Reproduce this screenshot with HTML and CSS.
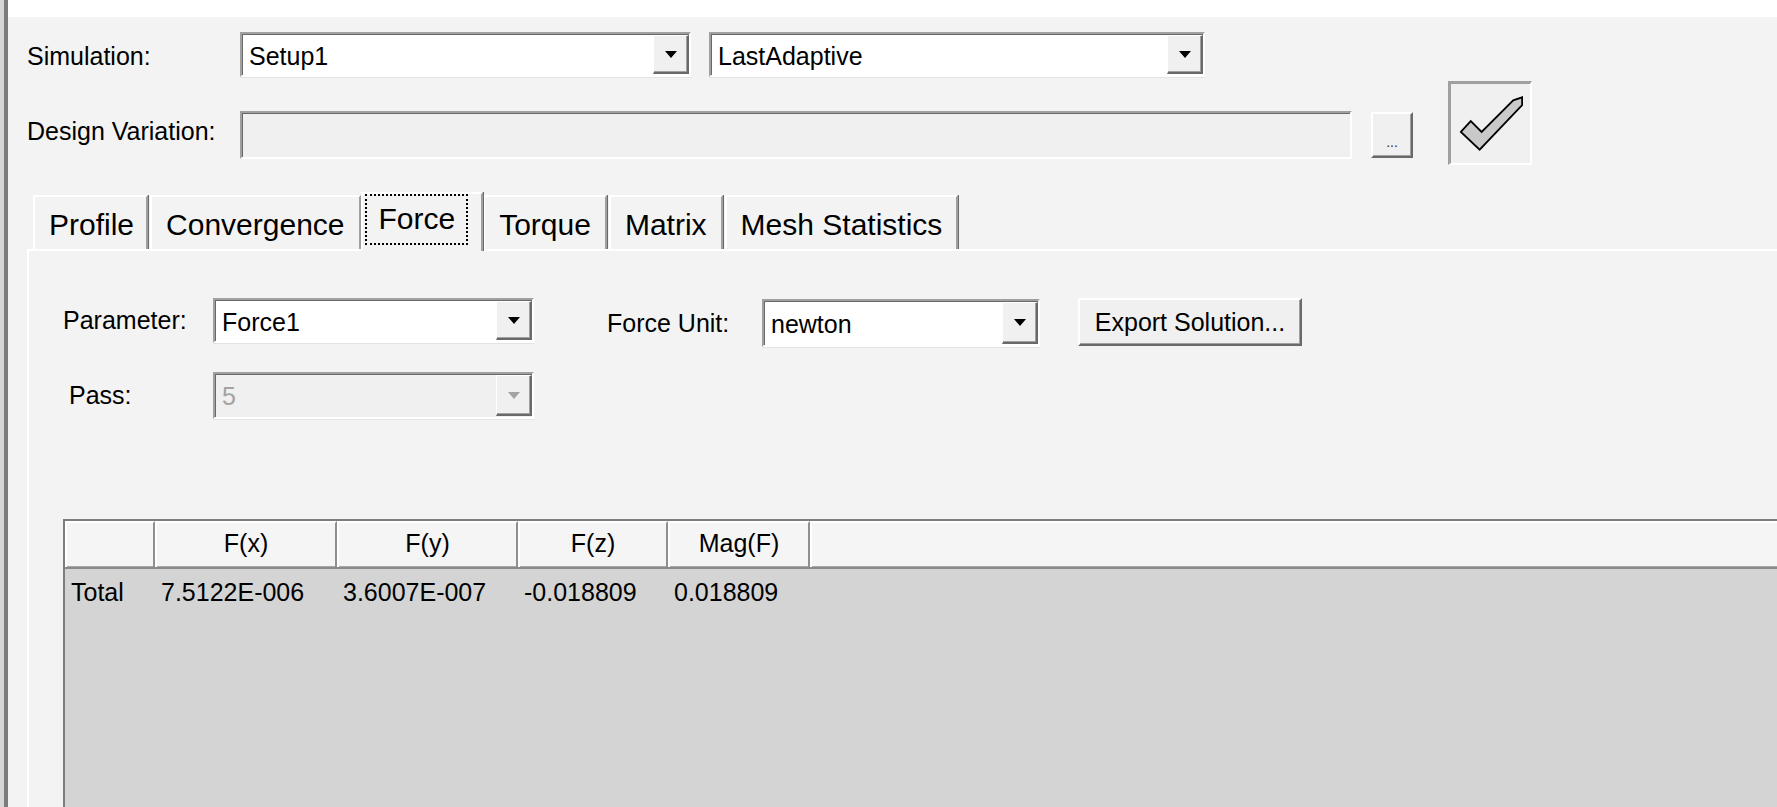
FILE: index.html
```html
<!DOCTYPE html>
<html lang="en">
<head>
    <meta charset="UTF-8">
    <meta name="viewport" content="width=device-width, initial-scale=1.0">
    <title>Solutions</title>
    <link rel="stylesheet" href="styles.css">
</head>
<body>
    <div class="window">
        <div class="frame-edge"></div>
        <div class="main">
            <div class="topbar"></div>

            <div class="content">
                <div class="sim-row">
                    <label class="label top-label">Simulation:</label>
                    <div class="combo setup-combo">
                        <span class="combo-text">Setup1</span>
                        <span class="combo-btn"><span class="arrow"></span></span>
                    </div>
                    <div class="combo solution-combo">
                        <span class="combo-text">LastAdaptive</span>
                        <span class="combo-btn"><span class="arrow"></span></span>
                    </div>
                </div>

                <div class="variation-row">
                    <label class="label top-label variation-label">Design Variation:</label>
                    <div class="textbox variation-box"></div>
                    <button class="btn dots-btn">...</button>
                    <button class="check-btn">
                        <svg width="80" height="80" viewBox="0 0 80 80">
                            <polygon points="10,48 20,37 31,48 63,16 72,13 72,21 29,66" fill="#c9c9c9" stroke="#000" stroke-width="1.8" stroke-linejoin="miter"/>
                        </svg>
                    </button>
                </div>

                <div class="tabs">
                    <div class="tab">Profile</div>
                    <div class="tab">Convergence</div>
                    <div class="tab active"><span class="focus">Force</span></div>
                    <div class="tab">Torque</div>
                    <div class="tab">Matrix</div>
                    <div class="tab">Mesh Statistics</div>
                </div>

                <div class="tab-panel">
                    <div class="param-row">
                        <label class="label param-label">Parameter:</label>
                        <div class="combo param-combo">
                            <span class="combo-text">Force1</span>
                            <span class="combo-btn"><span class="arrow"></span></span>
                        </div>
                        <label class="label unit-label">Force Unit:</label>
                        <div class="combo unit-combo">
                            <span class="combo-text">newton</span>
                            <span class="combo-btn"><span class="arrow"></span></span>
                        </div>
                        <button class="btn export-btn">Export Solution...</button>
                    </div>

                    <div class="pass-row">
                        <label class="label pass-label">Pass:</label>
                        <div class="combo param-combo disabled">
                            <span class="combo-text">5</span>
                            <span class="combo-btn"><span class="arrow"></span></span>
                        </div>
                    </div>

                    <div class="grid">
                        <div class="grid-head">
                            <div class="head-cell"></div>
                            <div class="head-cell">F(x)</div>
                            <div class="head-cell">F(y)</div>
                            <div class="head-cell">F(z)</div>
                            <div class="head-cell">Mag(F)</div>
                            <div class="head-cell"></div>
                        </div>
                        <div class="grid-body">
                            <div class="grid-row">
                                <div class="cell">Total</div>
                                <div class="cell">7.5122E-006</div>
                                <div class="cell">3.6007E-007</div>
                                <div class="cell">-0.018809</div>
                                <div class="cell">0.018809</div>
                                <div class="cell"></div>
                            </div>
                        </div>
                    </div>
                </div>
            </div>
        </div>
    </div>
</body>
</html>
```

FILE: styles.css
```css
html, body {
    margin: 0;
    height: 100%;
    overflow: hidden;
}

body {
    background-color: #f3f3f3;
    color: #000;
    font-family: "Liberation Sans", Arial, sans-serif;
    font-size: 25px;
}

.window {
    display: flex;
    height: 100%;
}

.frame-edge {
    width: 4px;
    flex-shrink: 0;
    background: #d6d6d6;
    border-right: 4px solid #7b7b7b;
}

.main {
    flex: 1;
    min-width: 0;
    display: flex;
    flex-direction: column;
}

.topbar {
    height: 17px;
    flex-shrink: 0;
    background: #fff;
}

.content {
    flex: 1;
    min-height: 0;
    display: flex;
    flex-direction: column;
    padding-left: 19px;
}

/* top rows */

.sim-row {
    display: flex;
    align-items: center;
    margin-top: 15px;
    height: 45px;
    flex-shrink: 0;
}

.label {
    line-height: 30px;
    white-space: nowrap;
}

.top-label {
    width: 213px;
    flex-shrink: 0;
    padding-top: 3px;
}

.variation-row {
    display: flex;
    align-items: flex-start;
    margin-top: 4px;
    height: 84px;
    flex-shrink: 0;
}

.variation-label {
    margin-top: 32px;
}

/* combo boxes */

.combo {
    display: flex;
    align-items: stretch;
    box-sizing: border-box;
    height: 45px;
    background: #fff;
    border-top: 2px solid #a0a0a0;
    border-left: 2px solid #a0a0a0;
    border-bottom: 2px solid #fff;
    border-right: 2px solid #fff;
    box-shadow: inset 1px 1px 0 #696969, 0 1px 0 #e3e3e3;
    flex-shrink: 0;
}

.combo-text {
    flex: 1;
    padding: 3px 0 0 7px;
    line-height: 38px;
}

.combo-btn {
    width: 36px;
    margin: 1px 0 1px 0;
    box-sizing: border-box;
    display: flex;
    align-items: center;
    justify-content: center;
    background: #f0f0f0;
    border-top: 1px solid #fff;
    border-left: 1px solid #fff;
    border-right: 2px solid #696969;
    border-bottom: 2px solid #696969;
    box-shadow: inset -1px -1px 0 #a0a0a0;
}

.arrow {
    width: 0;
    height: 0;
    border-left: 6px solid transparent;
    border-right: 6px solid transparent;
    border-top: 7px solid #000;
}

.setup-combo { width: 451px; margin-right: 18px; }
.solution-combo { width: 496px; }

.combo.disabled {
    background: #f0f0f0;
    color: #a3a3a3;
}

.combo.disabled .arrow {
    border-top-color: #a3a3a3;
}

/* text box and buttons */

.textbox {
    box-sizing: border-box;
    background: #f0f0f0;
    border-top: 2px solid #a0a0a0;
    border-left: 2px solid #a0a0a0;
    border-bottom: 2px solid #fff;
    border-right: 2px solid #fff;
    box-shadow: inset 1px 1px 0 #696969;
}

.variation-box {
    width: 1112px;
    height: 48px;
    margin-top: 30px;
}

.btn {
    box-sizing: border-box;
    background: #f0f0f0;
    font-family: inherit;
    font-size: 25px;
    color: #000;
    padding: 0;
    border-top: 2px solid #fff;
    border-left: 2px solid #fff;
    border-right: 2px solid #696969;
    border-bottom: 2px solid #696969;
    box-shadow: inset -1px -1px 0 #a0a0a0;
}

.dots-btn {
    width: 42px;
    height: 46px;
    margin-top: 31px;
    margin-left: 19px;
    font-size: 14px;
    padding-top: 14px;
    color: #333;
}

.check-btn {
    width: 84px;
    height: 84px;
    margin-left: 35px;
    padding: 0;
    box-sizing: border-box;
    background: #f0f0f0;
    border-top: 3px solid #a0a0a0;
    border-left: 3px solid #a0a0a0;
    border-right: 2px solid #fff;
    border-bottom: 2px solid #fff;
    display: flex;
    align-items: center;
    justify-content: center;
}

/* tabs */

.tabs {
    display: flex;
    align-items: flex-end;
    height: 57px;
    flex-shrink: 0;
    margin-top: 27px;
    margin-left: 6px;
    font-size: 30px;
}

.tab {
    box-sizing: border-box;
    height: 54px;
    padding: 0 14px 0 14px;
    line-height: 56px;
    background: #f3f3f3;
    border-top: 2px solid #fff;
    border-left: 2px solid #fff;
    border-right: 2px solid #a0a0a0;
    box-shadow: 1px 0 0 #6a6a6a;
    margin-right: 2px;
}

.tab:first-child {
    padding-right: 12px;
}

.tab.active {
    position: relative;
    z-index: 1;
    height: 59px;
    margin: 0 0 -2px -2px;
    padding: 0 13px 0 2px;
    line-height: 50px;
}

.focus {
    border: 2px dotted #000;
    padding: 6px 11px 8px 12px;
}

.tab-panel {
    flex: 1;
    min-height: 0;
    overflow: hidden;
    border-top: 2px solid #fff;
    border-left: 2px solid #fff;
    padding: 47px 0 0 34px;
}

/* force parameters */

.param-row {
    display: flex;
    align-items: flex-start;
    height: 49px;
}

.param-label {
    width: 150px;
    line-height: 45px;
}

.param-combo { width: 321px; }

.unit-label {
    width: 155px;
    margin-left: 73px;
    line-height: 50px;
}

.unit-combo {
    width: 278px;
    height: 48px;
    margin-top: 1px;
}

.unit-combo .combo-text {
    line-height: 41px;
}

.export-btn {
    width: 224px;
    height: 48px;
    margin-left: 38px;
    font-size: 25px;
}

.pass-row {
    display: flex;
    align-items: flex-start;
    margin-top: 25px;
}

.pass-label {
    width: 144px;
    margin-left: 6px;
    line-height: 47px;
}

.pass-row .combo { height: 47px; }

/* result grid */

.grid {
    margin-top: 100px;
    border-top: 2px solid #7d7d7d;
    border-left: 2px solid #7d7d7d;
    height: 400px;
}

.grid-head, .grid-row {
    display: grid;
    grid-template-columns: 90px 182px 181px 150px 142px 1fr;
}

.grid-head {
    height: 46px;
    background: #f5f5f5;
    border-bottom: 2px solid #8a8a8a;
    box-shadow: 0 -1px 0 #a8a8a8 inset;
}

.head-cell {
    border-left: 2px solid #fff;
    border-right: 2px solid #8f8f8f;
    border-top: 2px solid #fff;
    text-align: center;
    line-height: 40px;
}

.head-cell:last-child {
    border-right: none;
}

.grid-body {
    background: #d4d4d4;
    height: 352px;
}

.grid-row {
    height: 46px;
    line-height: 46px;
}

.cell {
    padding-left: 6px;
    white-space: nowrap;
}
```
